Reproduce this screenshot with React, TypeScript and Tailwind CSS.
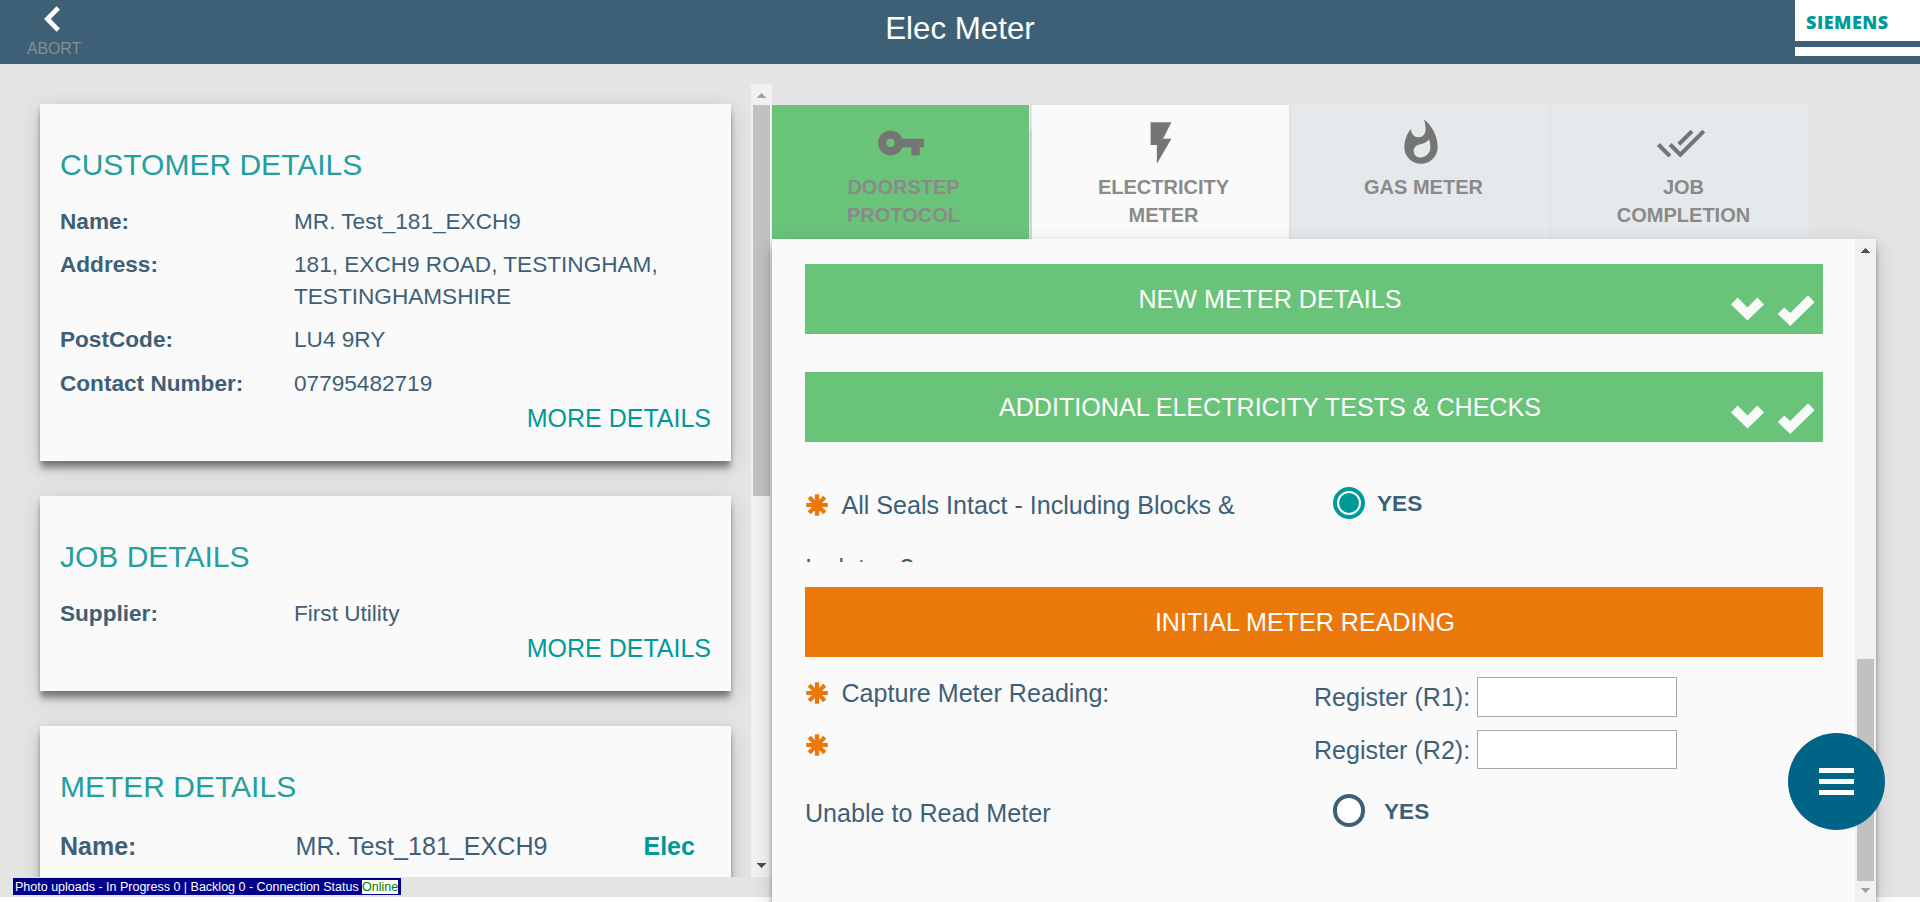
import type { ReactNode } from "react";
import { MdVpnKey, MdFlashOn, MdWhatshot, MdDoneAll } from "react-icons/md";

const SHADOW =
  "shadow-[0_8px_6px_-1px_rgba(0,0,0,0.36),0_6px_20px_0_rgba(0,0,0,0.16),0_2px_4px_0_rgba(0,0,0,0.12)]";

function Asterisk() {
  return (
    <svg viewBox="-11 -11 22 22" className="ml-px mr-[13.5px] inline-block size-[22px] align-[-1.5px]">
      <g stroke="#eb780a" strokeWidth="4.2">
        <path d="M0-10.8V10.8M-10.8 0H10.8M-7.8-7.8L7.8 7.8M7.8-7.8L-7.8 7.8" />
      </g>
      <circle r="5.2" fill="#eb780a" />
    </svg>
  );
}

function Arrow({ up, dark }: { up?: boolean; dark?: boolean }) {
  return (
    <svg viewBox="0 0 10 5" className="h-[5px] w-[10px] shrink-0" shapeRendering="crispEdges">
      <path d={up ? "M0 5L5 0L10 5Z" : "M0 0L5 5L10 0Z"} fill={dark ? "#505050" : "#a3a3a3"} />
    </svg>
  );
}

function Card({ title, children }: { title: string; children: ReactNode }) {
  return (
    <section className={`shrink-0 bg-[#fafafa] px-5 pt-11 pb-[25px] ${SHADOW}`}>
      <h2 className="text-[30px] leading-[33px] text-[#239fa0]">{title}</h2>
      {children}
    </section>
  );
}

function Field({ label, value }: { label: string; value: string }) {
  return (
    <div className="flex text-[22.6px] leading-8">
      <div className="w-[234px] font-bold">{label}</div>
      <div className="w-[400px]">{value}</div>
    </div>
  );
}

function More() {
  return <div className="text-right text-[25px] leading-9 text-[#009999]">MORE DETAILS</div>;
}

function Tab({ icon, lines, className }: { icon: ReactNode; lines: string[]; className: string }) {
  return (
    <div className={`flex h-[134px] flex-col items-center pt-[13px] text-[#757575] ${className}`}>
      {icon}
      <div className="mt-[5px] pl-1.5 text-center text-[20px] leading-7 font-bold text-[#8a8a8a]">
        {lines.map((l) => (
          <div key={l}>{l}</div>
        ))}
      </div>
    </div>
  );
}

function DoneBar({ title, className }: { title: string; className: string }) {
  return (
    <div className={`flex h-[70px] shrink-0 items-center bg-[#69c47a] text-white ${className}`}>
      <div className="w-[930px] text-center">{title}</div>
      <svg viewBox="0 0 88 70" className="h-[70px] w-[88px] overflow-visible" fill="#fafafa">
        <path d="M-4 40.4L2.6 33.4L12.5 43.6L22.4 33.4L29 40.4L12.5 56.4Z" />
        <path d="M42.7 50L49.2 43.4L55.2 49L73 31.3L79.5 38.2L55.2 62Z" />
      </svg>
    </div>
  );
}

export default function App() {
  return (
    <div className="h-[902px] w-[1920px] overflow-hidden bg-[#fcfcfc] font-['Liberation_Sans',Arial,sans-serif] text-[#3e6077]">
      <header className="flex h-16 bg-[#3e6076]">
        <div className="w-[125px] pt-1.5 pl-[27px]">
          <svg viewBox="0 0 16 26" className="ml-[17px] h-[26px] w-4" fill="none" stroke="#fff" strokeWidth="4.8">
            <path d="M14.3 1.8L3.4 13L14.3 24.2" strokeLinejoin="miter" />
          </svg>
          <div className="mt-2 text-[15.8px] leading-[18px] text-[#87908f]">ABORT</div>
        </div>
        <div className="flex-1 pt-[11px] text-center text-[31.3px] leading-9 text-white">Elec Meter</div>
        <div className="flex h-14 w-[125px] flex-col bg-white">
          <div className="h-[41px] pt-2.5 pl-[11px] font-['Open_Sans',sans-serif] text-[18px] leading-6 font-extrabold tracking-[0.5px] text-[#009999]">
            SIEMENS
          </div>
          <div className="h-[5.5px] bg-[#3e6076]" />
        </div>
      </header>

      <main className="flex h-[833px] bg-[#e4e4e4]">
        <div className="w-[772px] shrink-0 pt-5">
          <div className="flex h-[793px]">
            <div className="flex w-[751px] flex-col gap-[35px] overflow-hidden pt-5 pr-5 pl-10">
              <Card title="CUSTOMER DETAILS">
                <div className="mt-[25px] flex flex-col">
                  <Field label="Name:" value="MR. Test_181_EXCH9" />
                  <div className="h-[11px]" />
                  <Field label="Address:" value="181, EXCH9 ROAD, TESTINGHAM, TESTINGHAMSHIRE" />
                  <div className="h-[11px]" />
                  <Field label="PostCode:" value="LU4 9RY" />
                  <div className="h-3" />
                  <Field label="Contact Number:" value="07795482719" />
                </div>
                <More />
              </Card>
              <Card title="JOB DETAILS">
                <div className="mt-[25px]">
                  <Field label="Supplier:" value="First Utility" />
                </div>
                <More />
              </Card>
              <Card title="METER DETAILS">
                <div className="mt-[25px] flex h-[80px] text-[25.1px] leading-9">
                  <div className="w-[235.5px] text-[25px] font-bold">Name:</div>
                  <div className="w-[348px]">MR. Test_181_EXCH9</div>
                  <div className="text-[25px] font-bold text-[#009999]">Elec</div>
                </div>
              </Card>
            </div>
            <div className="flex w-[21px] flex-col items-center bg-[#f1f1f1] pt-[9px]">
              <div className="mr-px flex">
                <Arrow up />
              </div>
              <div className="mt-[7px] h-[391px] w-[17px] bg-[#c1c1c1]" />
              <div className="flex-1" />
              <div className="mr-px flex pb-[9px]">
                <Arrow dark />
              </div>
            </div>
          </div>
          <div className="mt-px ml-[13px] flex h-[17px] w-[388px] items-center bg-[#00008b] pl-0.5 text-[12.5px] leading-[14px] whitespace-nowrap text-white">
            <span className="w-[347px]">Photo uploads - In Progress 0 | Backlog 0 - Connection Status</span>
            <span className="bg-white text-[#008000]">Online</span>
          </div>
        </div>

        <div className="h-[838px] w-[1148px] shrink-0 pt-[41px]">
          <div className="flex">
            <Tab
              className="mr-[3px] w-[257px] bg-[#69c47a]"
              icon={<MdVpnKey size={50} className="shrink-0" />}
              lines={["DOORSTEP", "PROTOCOL"]}
            />
            <Tab
              className="mr-[3px] w-[257px] bg-[#fafafa] shadow-[-2px_22px_4px_-2px_rgba(0,0,0,0.22)]"
              icon={<MdFlashOn size={50} className="shrink-0" />}
              lines={["ELECTRICITY", "METER"]}
            />
            <Tab
              className="mr-[3px] w-[257px] bg-[#e4eaec]"
              icon={<MdWhatshot size={50} className="shrink-0" />}
              lines={["GAS METER"]}
            />
            <Tab
              className="w-[257px] bg-[#e4eaec]"
              icon={<MdDoneAll size={50} className="shrink-0" />}
              lines={["JOB", "COMPLETION"]}
            />
          </div>

          <div className={`relative flex h-[663px] w-[1104px] bg-[#fafafa] ${SHADOW}`}>
            <div className="flex w-[1083px] flex-col pt-[25px] pl-[33px] text-[25.1px] leading-9">
              <DoneBar title="NEW METER DETAILS" className="w-[1018px]" />
              <DoneBar title="ADDITIONAL ELECTRICITY TESTS & CHECKS" className="mt-[38px] w-[1018px]" />

              <div className="grid h-[120px] shrink-0 grid-cols-[509px_1fr] overflow-hidden pt-8">
                <div className="w-[450px] leading-[62.5px]">
                  <Asterisk />
                  All Seals Intact - Including Blocks &amp;
                  <br />
                  Isolators?
                </div>
                <div className="flex items-start pt-[13px] pl-[19px]">
                  <div className="flex size-8 items-center justify-center rounded-full bg-[#009999]">
                    <div className="size-6 rounded-full border-2 border-white" />
                  </div>
                  <div className="ml-3 pt-px text-[22.6px] leading-8 font-bold">YES</div>
                </div>
              </div>

              <div className="mt-[25px] flex h-[70px] w-[1018px] shrink-0 items-center bg-[#eb780a] text-white">
                <div className="w-[1000px] text-center">INITIAL METER READING</div>
              </div>

              <div className="grid h-[66px] shrink-0 grid-cols-[509px_1fr] pt-[18px]">
                <div>
                  <Asterisk />
                  Capture Meter Reading:
                </div>
                <div className="mt-0.5 flex h-10 items-center">
                  <div className="w-[163px]">Register (R1):</div>
                  <input className="h-10 w-[200px] border border-[#a9a9a9] bg-white" />
                </div>
              </div>
              <div className="grid h-[52px] shrink-0 grid-cols-[509px_1fr] pt-1">
                <div>
                  <Asterisk />
                </div>
                <div className="mt-[3px] flex h-[39px] items-center">
                  <div className="w-[163px]">Register (R2):</div>
                  <input className="h-[39px] w-[200px] border border-[#a9a9a9] bg-white" />
                </div>
              </div>
              <div className="grid shrink-0 grid-cols-[509px_1fr] pt-5">
                <div>Unable to Read Meter</div>
                <div className="-mt-px flex items-start pl-[19px]">
                  <div className="h-[33px] w-8 rounded-full border-4 border-[#3e6076] bg-white" />
                  <div className="ml-[19px] pt-0.5 text-[22.6px] leading-8 font-bold">YES</div>
                </div>
              </div>
            </div>

            <div className="flex w-[21px] flex-col items-center bg-[#f1f1f1] pt-[9px]">
              <div className="mr-px flex">
                <Arrow up dark />
              </div>
              <div className="flex-1" />
              <div className="h-[222px] w-[17px] bg-[#c1c1c1]" />
              <div className="mt-[7px] mr-px mb-[9px] flex">
                <Arrow />
              </div>
            </div>

            <button className="absolute top-[493.5px] left-[1016px] flex size-[97px] flex-col items-center justify-center gap-1.5 rounded-full bg-[#006486]">
              <span className="-ml-px h-[5px] w-[35px] bg-white" />
              <span className="-ml-px h-[5px] w-[35px] bg-white" />
              <span className="-ml-px h-[5px] w-[35px] bg-white" />
            </button>
          </div>
        </div>
      </main>
    </div>
  );
}
